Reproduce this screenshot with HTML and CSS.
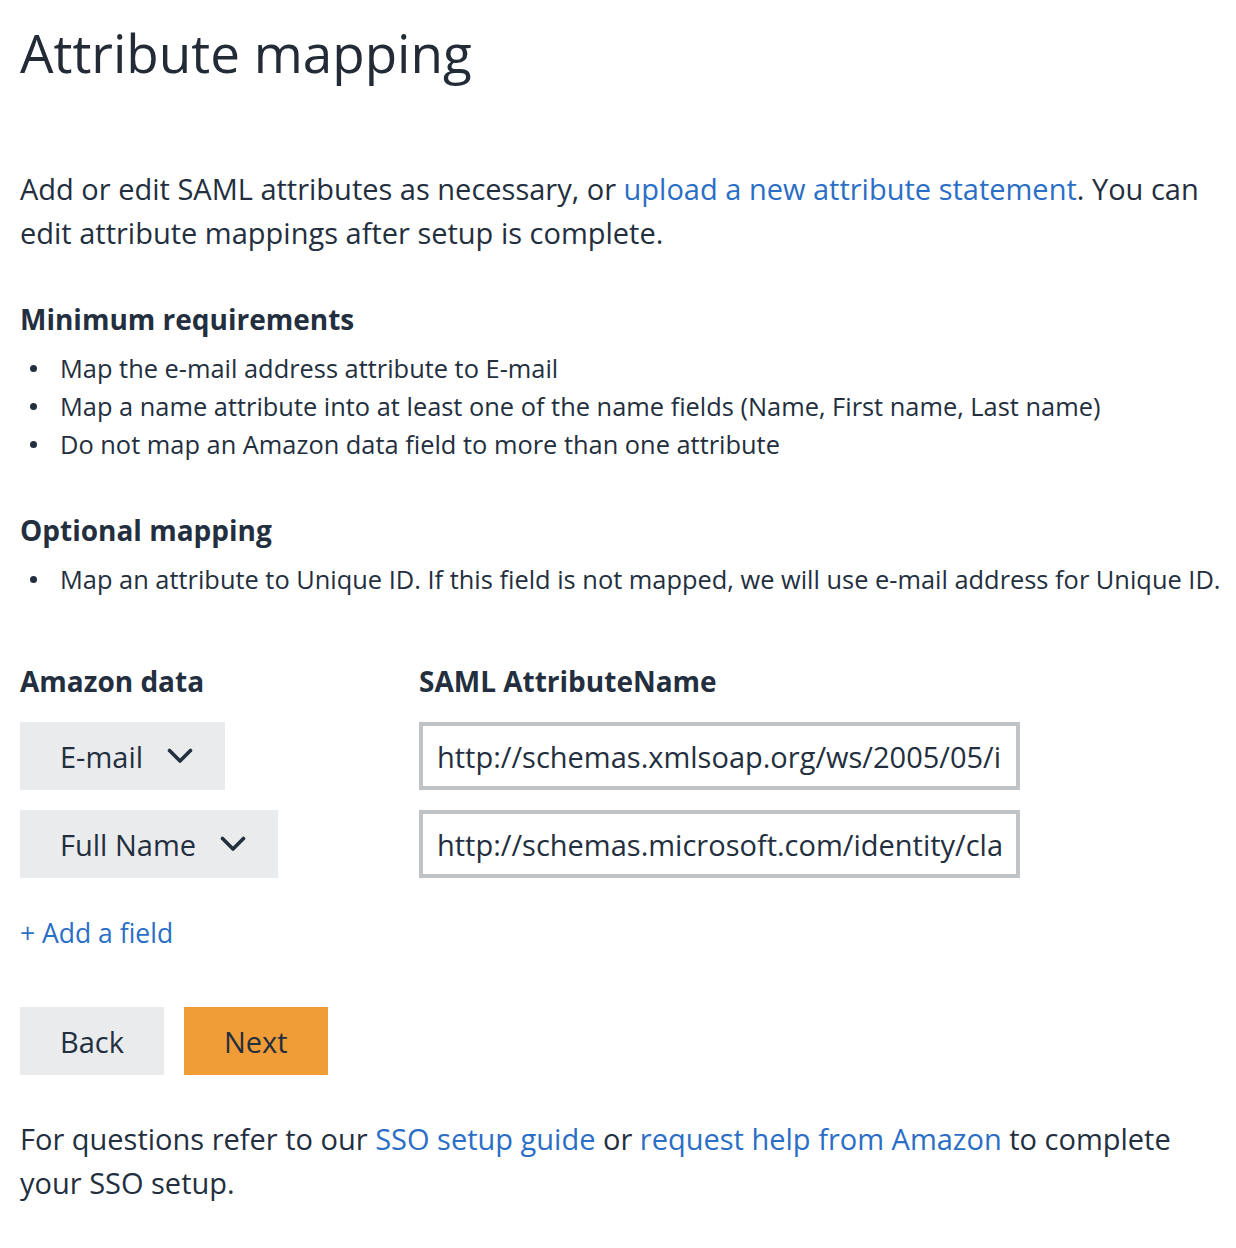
FILE: index.html
```html
<!DOCTYPE html>
<html lang="en">
<head>
<meta charset="utf-8">
<title>Attribute mapping</title>
<link rel="stylesheet" href="styles.css">
</head>
<body>
<main class="page">
  <h1 class="title">Attribute mapping</h1>
  <p class="intro">Add or edit SAML attributes as necessary, or <a class="link" href="#">upload a new attribute statement</a>. You can edit attribute mappings after setup is complete.</p>

  <h2 class="section-title">Minimum requirements</h2>
  <ul class="bullets">
    <li>Map the e-mail address attribute to E-mail</li>
    <li>Map a name attribute into at least one of the name fields (Name, First name, Last name)</li>
    <li>Do not map an Amazon data field to more than one attribute</li>
  </ul>

  <h2 class="section-title section-title--optional">Optional mapping</h2>
  <ul class="bullets">
    <li>Map an attribute to Unique ID. If this field is not mapped, we will use e-mail address for Unique ID.</li>
  </ul>

  <div class="mapping">
    <div class="col-head">Amazon data</div>
    <div class="col-head">SAML AttributeName</div>

    <div class="cell"><button class="select" type="button">E-mail<svg class="chevron" width="26" height="16" viewBox="0 0 26 16"><path d="M2.5 2.5 L13 13 L23.5 2.5" fill="none" stroke="#232f3e" stroke-width="3.6" stroke-linecap="round" stroke-linejoin="round"/></svg></button></div>
    <div class="cell"><input class="text-input" type="text" value="http://schemas.xmlsoap.org/ws/2005/05/identity/claims/emailaddress"></div>

    <div class="cell"><button class="select" type="button">Full Name<svg class="chevron" width="26" height="16" viewBox="0 0 26 16"><path d="M2.5 2.5 L13 13 L23.5 2.5" fill="none" stroke="#232f3e" stroke-width="3.6" stroke-linecap="round" stroke-linejoin="round"/></svg></button></div>
    <div class="cell"><input class="text-input" type="text" value="http://schemas.microsoft.com/identity/claims/displayname"></div>
  </div>

  <a class="link add-field" href="#">+ Add a field</a>

  <div class="actions">
    <button class="btn btn--secondary" type="button">Back</button>
    <button class="btn btn--primary" type="button">Next</button>
  </div>

  <p class="footer-note">For questions refer to our <a class="link" href="#">SSO setup guide</a> or <a class="link" href="#">request help from Amazon</a> to complete your SSO setup.</p>
</main>
</body>
</html>
```
FILE: styles.css
```css
html, body {
  margin: 0;
  padding: 0;
  background: #ffffff;
}

body {
  font-family: "Open Sans", "Noto Sans", "Liberation Sans", sans-serif;
  color: #232f3e;
}

.page {
  padding: 21px 16px 40px 20px;
  display: flex;
  flex-direction: column;
  align-items: flex-start;
}

.title {
  margin: 0;
  font-size: 53px;
  line-height: 64px;
  font-weight: 500;
  color: #232b37;
}

.intro {
  margin: 82px 0 0;
  font-size: 29px;
  line-height: 44px;
}

.link {
  color: #2b6ec6;
  text-decoration: none;
}

.section-title {
  margin: 44px 0 0;
  font-size: 28px;
  line-height: 40px;
  font-weight: 700;
}

.section-title--optional {
  margin-top: 47px;
}

.bullets {
  margin: 10px 0 0;
  padding: 0;
  list-style: none;
}

.bullets li {
  display: flex;
  align-items: center;
  font-size: 25.4px;
  line-height: 38px;
  white-space: nowrap;
}

.bullets li::before {
  content: "";
  flex: none;
  width: 7px;
  height: 7px;
  border-radius: 50%;
  background: #232f3e;
  margin: 0 23px 0 10px;
}

.mapping {
  margin-top: 63px;
  display: grid;
  grid-template-columns: 399px 601px;
  row-gap: 20px;
}

.col-head {
  font-size: 28px;
  line-height: 40px;
  font-weight: 700;
  margin-bottom: 1px;
}

.cell {
  display: flex;
  align-items: center;
}

.select {
  display: inline-flex;
  align-items: center;
  gap: 24px;
  height: 68px;
  padding: 0 32px 0 40px;
  border: 0;
  border-radius: 0;
  background: #e9ebed;
  color: #232f3e;
  font-family: inherit;
  font-size: 29px;
  cursor: pointer;
}

.chevron {
  display: block;
  flex: none;
}

.text-input {
  box-sizing: border-box;
  width: 601px;
  height: 68px;
  margin: 0;
  padding: 0 14px 0 14px;
  border: 4px solid #c0c3c6;
  border-radius: 0;
  outline: none;
  background: #ffffff;
  color: #232f3e;
  font-family: inherit;
  font-size: 29px;
}

.add-field {
  margin-top: 33px;
  font-size: 26.5px;
  line-height: 44px;
}

.actions {
  margin-top: 52px;
  display: flex;
  gap: 20px;
}

.btn {
  height: 68px;
  padding: 0 40px;
  border: 0;
  border-radius: 0;
  font-family: inherit;
  font-size: 29px;
  color: #232f3e;
  cursor: pointer;
}

.btn--secondary {
  background: #e9ebed;
}

.btn--primary {
  background: #f09d38;
}

.footer-note {
  margin: 42px 0 0;
  font-size: 29px;
  line-height: 44px;
}
```
